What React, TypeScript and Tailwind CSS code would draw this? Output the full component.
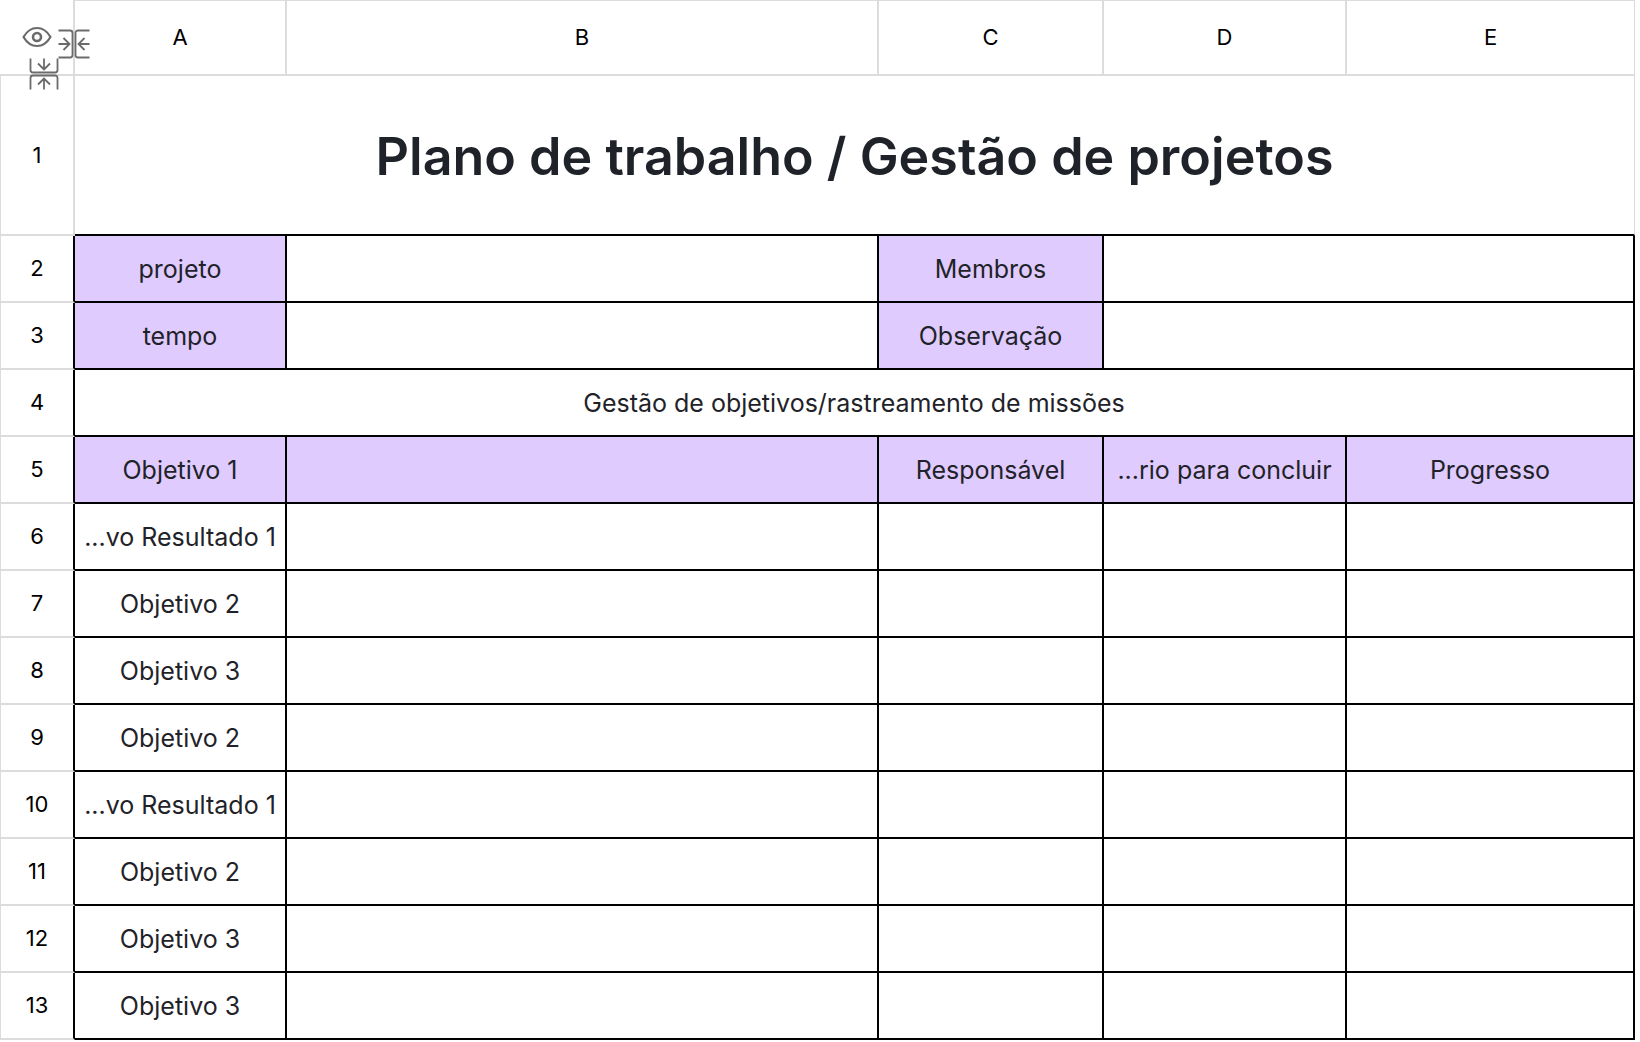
import clsx from 'clsx';

type Cell = {
  text?: string;
  span?: number;
  filled?: boolean;
};

const columns = ['A', 'B', 'C', 'D', 'E'];

const taskRow = (text: string): Cell[] => [{ text }, {}, {}, {}, {}];

const rows: Cell[][] = [
  [{ text: 'projeto', filled: true }, {}, { text: 'Membros', filled: true }, { span: 2 }],
  [{ text: 'tempo', filled: true }, {}, { text: 'Observação', filled: true }, { span: 2 }],
  [{ text: 'Gestão de objetivos/rastreamento de missões', span: 5 }],
  [
    { text: 'Objetivo 1', filled: true },
    { filled: true },
    { text: 'Responsável', filled: true },
    { text: '...rio para concluir', filled: true },
    { text: 'Progresso', filled: true },
  ],
  taskRow('...vo Resultado 1'),
  taskRow('Objetivo 2'),
  taskRow('Objetivo 3'),
  taskRow('Objetivo 2'),
  taskRow('...vo Resultado 1'),
  taskRow('Objetivo 2'),
  taskRow('Objetivo 3'),
  taskRow('Objetivo 3'),
];

function EyeIcon() {
  return (
    <svg width="30" height="22" viewBox="0 0 30 22" fill="none" stroke="#6b6b6b" strokeWidth="2.200">
      <path d="M1.500 11C5 5 9.500 2 15 2s10 3 13.500 9C25 17 20.500 20 15 20S5 17 1.500 11Z" strokeLinejoin="round" />
      <circle cx="15" cy="11" r="4" strokeWidth="2.600" />
    </svg>
  );
}

// Two brackets facing each other with an arrow pointing at the grid line
function CollapseIcon({ className }: { className?: string }) {
  return (
    <svg
      className={className}
      width="32"
      height="32"
      viewBox="0 0 32 32"
      fill="none"
      stroke="#6b6b6b"
      strokeWidth="1.800"
    >
      <path d="M0.500 2.500H12a2.500 2.500 0 0 1 2.500 2.500v22A2.500 2.500 0 0 1 12 29.500H0.500" />
      <path d="M31.500 2.500H20a2.500 2.500 0 0 0-2.500 2.500v22A2.500 2.500 0 0 0 20 29.500H31.500" />
      <path d="M0.500 16H11.500M5.500 10l6 6-6 6" />
      <path d="M31.500 16H20.500M26.500 10l-6 6 6 6" />
    </svg>
  );
}

export default function App() {
  return (
    <main className="min-h-screen bg-white pr-[5px] font-['Inter',sans-serif] text-[#1f2329]">
      <table className="w-full table-fixed border-separate border-spacing-0 text-center">
        <colgroup>
          <col className="w-[75px]" />
          <col className="w-[212px]" />
          <col />
          <col className="w-[225px]" />
          <col className="w-[243px]" />
          <col className="w-[288px]" />
        </colgroup>

        <thead>
          <tr className="h-[76px]">
            <td className="relative border-r-2 border-b-2 border-[#dcdcdc] p-0">
              <button type="button" aria-label="Mostrar ocultos" className="mx-auto block">
                <EyeIcon />
              </button>
              <button type="button" aria-label="Recolher colunas" className="absolute top-7 -right-[17px]">
                <CollapseIcon />
              </button>
              <button type="button" aria-label="Recolher linhas" className="absolute -bottom-4 left-7">
                <CollapseIcon className="rotate-90" />
              </button>
            </td>
            {columns.map((name) => (
              <th
                key={name}
                scope="col"
                className="border-t border-r-2 border-b-2 border-[#dcdcdc] p-0 text-[22px] font-normal text-black last:border-r"
              >
                {name}
              </th>
            ))}
          </tr>
        </thead>

        <tbody>
          <tr className="h-[160px]">
            <th
              scope="row"
              className="border-r-2 border-b-2 border-l border-[#dcdcdc] p-0 text-[22px] font-normal text-black"
            >
              1
            </th>
            <td colSpan={5} className="border-r border-b-2 border-r-[#dcdcdc] border-b-black px-0 pt-1 pb-0">
              <h1 className="text-[52px] leading-[64px] font-semibold">
                Plano de trabalho / Gestão de projetos
              </h1>
            </td>
          </tr>

          {rows.map((cells, i) => (
            <tr key={i} className="h-[67px]">
              <th
                scope="row"
                className="border-r-2 border-b-2 border-l border-[#dcdcdc] border-r-black p-0 text-[22px] font-normal text-black"
              >
                {i + 2}
              </th>
              {cells.map(({ text, span, filled }, j) => (
                <td
                  key={j}
                  colSpan={span}
                  className={clsx(
                    'border-r-2 border-b-2 border-black p-0 text-[25px] leading-8 whitespace-nowrap',
                    filled && 'bg-[#dfcbfe]',
                  )}
                >
                  {text}
                </td>
              ))}
            </tr>
          ))}
        </tbody>
      </table>
    </main>
  );
}
